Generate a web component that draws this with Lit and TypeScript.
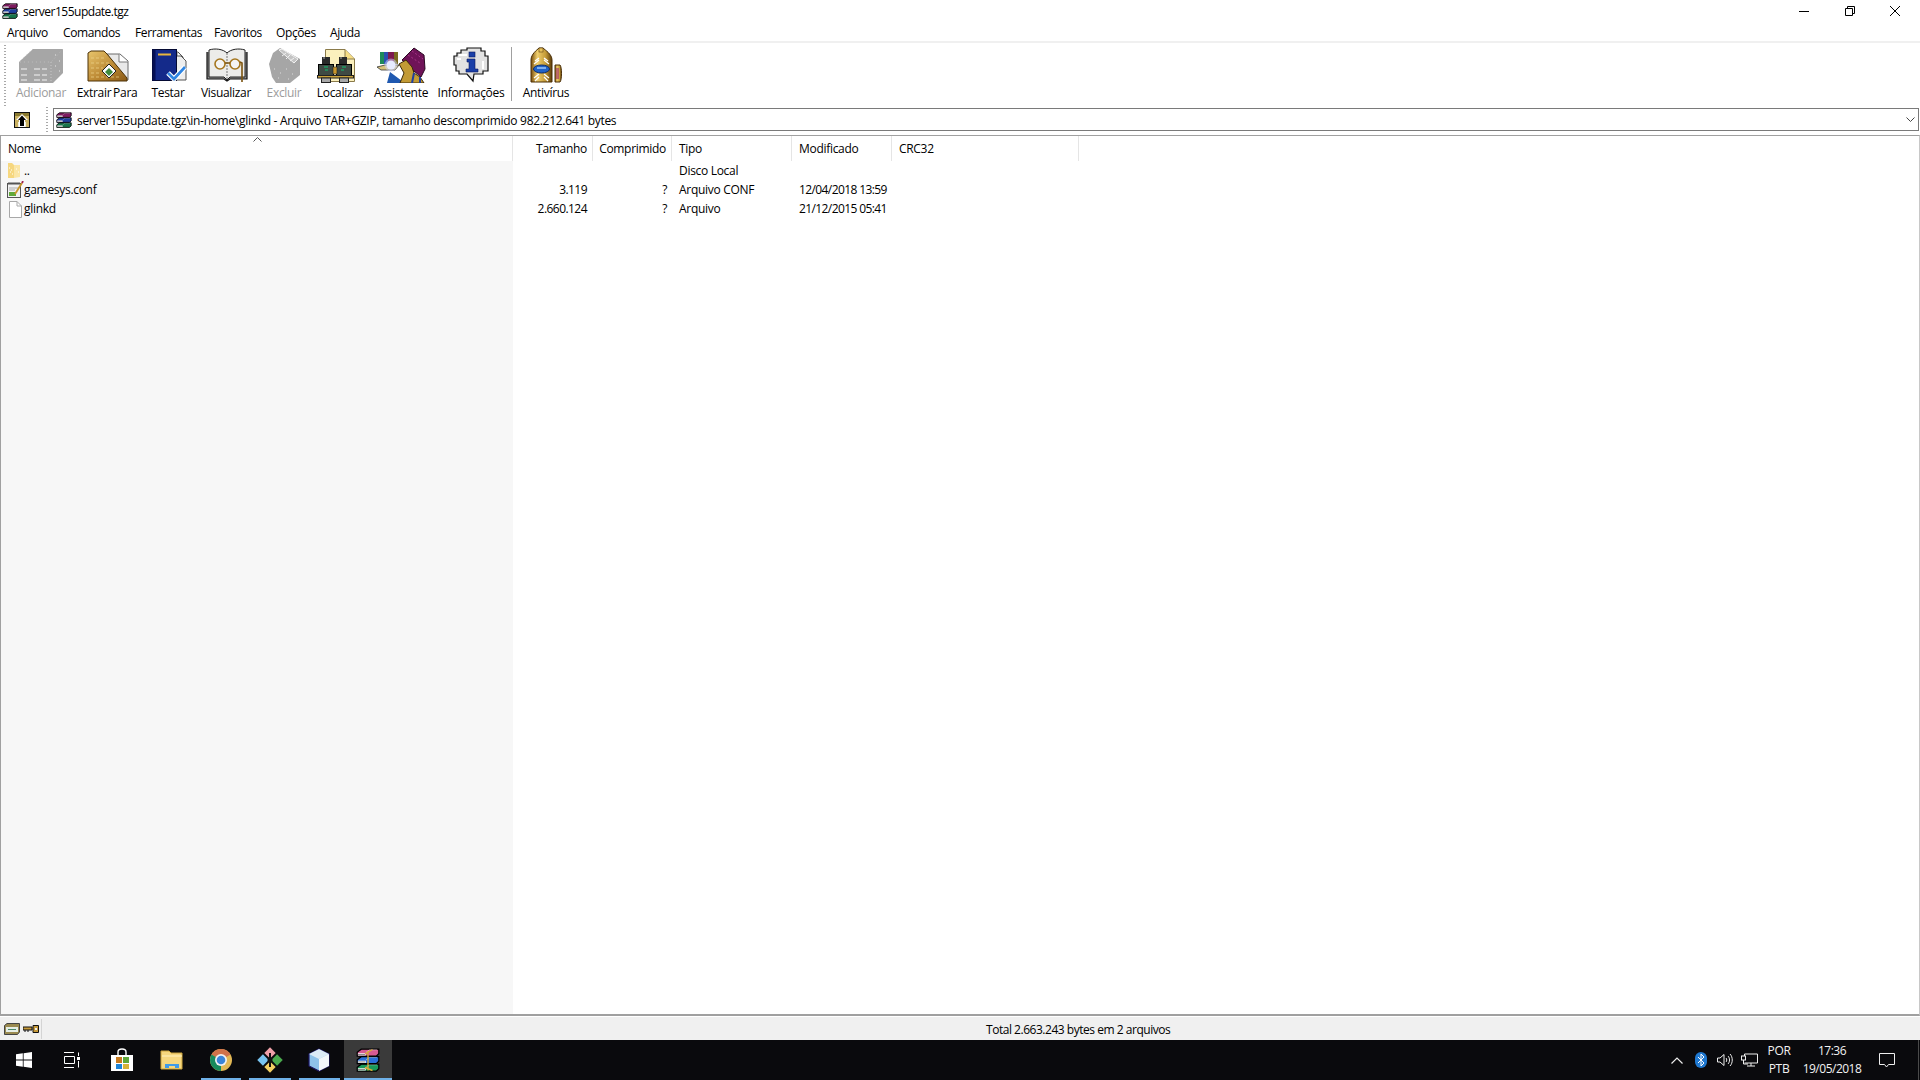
import { LitElement, html, css, svg } from "lit";
import { customElement } from "lit/decorators.js";

const book = (y: number, c: string) => svg`
  <path d="M.8 ${y + 2}L3.500 ${y}H15.200V${y + 3}L13.500 ${y + 4.600}H.8Z" fill="${c}" stroke="#000" stroke-width=".8"/>
  <path d="M1.300 ${y + 2.700}H6.500V${y + 4.200}H1.300Z" fill="#fff"/>
  <path d="M1.300 ${y + 3.500}H6" stroke="#333" stroke-width=".4"/>
  <path d="M6.500 ${y + 2.300}L9 ${y + .4}H14" stroke="#fff" stroke-opacity=".45" stroke-width=".6" fill="none"/>`;

const rar = (s: number, a = "#7d1a5f", b = "#1f3f9e", c = "#16754a", strap = false) => html`<svg width=${s} height=${s} viewBox="0 0 16 16" class="ico">
  ${book(10.800, c)}${book(5.800, b)}${book(.8, a)}
  ${strap ? svg`<path d="M8 2V15M11 1L6 4M6 13L11 15" stroke="#d8a93a" stroke-width=".9" fill="none"/>` : ""}
</svg>`;

const ICONS: Record<string, unknown> = {
  add: html`<svg width="48" height="36" viewBox="0 0 48 36" class="ico">
    <path d="M2 15L16 2H46V26L36 36H2Z" fill="#a6a6a6"/>
    <path d="M16 2L2 15H34L46 2" fill="none" stroke="#bdbdbd" stroke-dasharray="1 3"/>
    <path d="M34 15V36" stroke="#c8c8c8" stroke-dasharray="1 2"/>
    <path d="M4 22H12M17 22H30M4 28H12M17 28H30M4 33H12M17 33H30" stroke="#f4f4f4" stroke-width="1" stroke-dasharray="6 2"/>
    <path d="M38 8h1M42 14h1M38 19h1M42 24h1" stroke="#e8e8e8"/>
  </svg>`,
  extract: html`<svg width="48" height="36" viewBox="0 0 48 36" class="ico">
    <defs><linearGradient id="g1" x1="0" y1="0" x2="1" y2="1"><stop offset="0" stop-color="#e9c56c"/><stop offset=".6" stop-color="#b88430"/><stop offset="1" stop-color="#8a5a16"/></linearGradient></defs>
    <path d="M24 7H37L45 14V33H42Z" fill="#e9e9e9" stroke="#6a6a6a"/>
    <path d="M36 7V15H45" fill="#fff" stroke="#7a7a7a"/>
    <path d="M5 6L8 4H21L24 7L44 31V34H5Z" fill="url(#g1)" stroke="#4c3208"/>
    <path d="M8 11H22M8 16H26M8 21H20M8 26H17M8 30H38" stroke="#f0d68d" stroke-dasharray="3 2" opacity=".7"/>
    <path d="M26 17L33 24L26 31L19 24Z" fill="#fff" stroke="#222"/>
    <path d="M26 21L30 25L26 29L22 25Z" fill="#3f8a3f"/>
  </svg>`,
  test: html`<svg width="48" height="36" viewBox="0 0 48 36" class="ico">
    <path d="M26 5H34L39 10V32H26Z" fill="#d9d9d9" stroke="#555"/>
    <path d="M33 5V11H39" fill="#fff" stroke="#666"/>
    <path d="M30 9H37L42 14V33H30Z" fill="#eee" stroke="#555"/>
    <rect x="8.500" y="2.500" width="24" height="31" fill="#142a8a" stroke="#050a33"/>
    <rect x="8.500" y="2.500" width="3" height="31" fill="#050f55"/>
    <path d="M14 7.500H27" stroke="#e8b63e" stroke-width="2"/>
    <path d="M24 26L30 32L41 20" fill="none" stroke="#fff" stroke-width="5"/>
    <path d="M24 26L30 32L41 20" fill="none" stroke="#2f86e4" stroke-width="2.600"/>
  </svg>`,
  view: html`<svg width="48" height="36" viewBox="0 0 48 36" class="ico">
    <path d="M5 5V32H22L25 34L28 32H45V5" fill="#8c8c8c" stroke="#111" stroke-width="1.200"/>
    <path d="M7 3C13 1 21 2 25 6C29 2 37 1 43 3V30H28L25 33L22 30H7Z" fill="#ececea" stroke="#222"/>
    <path d="M25 6V33" stroke="#777" stroke-dasharray="2 1"/>
    <circle cx="18" cy="17" r="5" fill="#f4f4f4" stroke="#a5761e" stroke-width="1.600"/>
    <circle cx="33" cy="17" r="5" fill="#f4f4f4" stroke="#a5761e" stroke-width="1.600"/>
    <path d="M23 16H28M38 15L40 16L40 35" fill="none" stroke="#7c5410" stroke-width="1.600"/>
  </svg>`,
  del: html`<svg width="48" height="36" viewBox="0 0 48 36" class="ico">
    <path d="M9 17L13 6L20 1L40 12V28L30 36H16L12 30Z" fill="#a6a6a6"/>
    <path d="M19 3L22 2L38 12L34 16ZM26 6L22 9M30 8L26 12M34 11L30 14" fill="#c4c4c4" stroke="#f2f2f2"/>
    <path d="M14 22h1M20 26h1M26 22h1M32 27h1M18 31h1M28 32h1" stroke="#dcdcdc"/>
  </svg>`,
  find: html`<svg width="48" height="36" viewBox="0 0 48 36" class="ico">
    <path d="M9.500 2.500H29L38.500 12V34.500H9.500Z" fill="#fbf0bd" stroke="#8a7a4a"/>
    <path d="M29 2.500V12H38.500" fill="#f6dd85" stroke="#8a7a4a"/>
    <path d="M6 10H14V17H6ZM23 10H31V17H23Z" fill="#2a2a2a"/>
    <path d="M7 11H9M24 11H26" stroke="#aaa"/>
    <rect x="2.500" y="17.500" width="15" height="11" fill="#3f4a44" stroke="#000"/>
    <rect x="20.500" y="17.500" width="15" height="11" fill="#3f4a44" stroke="#000"/>
    <path d="M8 20h4M9 23h3M26 20h4M25 23h3" stroke="#1f9a62" stroke-width="1.500"/>
    <rect x="17" y="20" width="4" height="7" fill="#c9962a" stroke="#222" stroke-width=".6"/>
    <rect x="1.500" y="28.500" width="36" height="2.500" fill="#c9a23c" stroke="#222"/>
    <rect x="5.500" y="31" width="9" height="4.500" fill="#a8a8a8" stroke="#222"/>
    <rect x="23.500" y="31" width="9" height="4.500" fill="#a8a8a8" stroke="#222"/>
  </svg>`,
  wizard: html`<svg width="50" height="36" viewBox="0 0 50 36" class="ico">
    <rect x="4" y="5" width="4" height="12" fill="#1f8a5a"/><rect x="8" y="5" width="4" height="12" fill="#2b4fb0"/>
    <rect x="12" y="5" width="6" height="12" fill="#7d1a4f"/><rect x="18" y="5" width="4" height="12" fill="#7a6a1f"/>
    <path d="M1 20L9 18H23L19 23H5Z" fill="#d7c27a" stroke="#333" stroke-width=".8"/>
    <circle cx="15" cy="18" r="4.500" fill="#fff"/><circle cx="15" cy="18" r="6.500" fill="#cfd8ff" opacity=".5"/>
    <path d="M14 25L26 34V36H11Z" fill="#1f58b0"/>
    <path d="M26 13L33 6L38 1L48 8L49 22L45 30L38 24Z" fill="#6f1358" stroke="#2b0822"/>
    <path d="M32 8L44 16M36 4L47 12" stroke="#a63388" stroke-dasharray="2 2"/>
    <path d="M23 17L30 13L36 20L38 26L44 30L48 36H24L28 26Z" fill="#c29a35" stroke="#3c2a08"/>
    <path d="M38 26L36 36M44 30L44 36" stroke="#1f3f9e" stroke-width="2"/>
  </svg>`,
  info: html`<svg width="36" height="36" viewBox="0 0 36 36" class="ico">
    <path d="M8 3H14V1H28V4H32V9H35V24H30V27H21L20 34L14 27H6V24H3V18H1V9H4V6H8Z" fill="#e2e2e2" stroke="#111" stroke-width="1.200"/>
    <path d="M6 8H14M4 12H8M30 14V22" stroke="#fff" stroke-width="2"/>
    <rect x="16" y="5" width="6" height="5" fill="#1a3fa8" stroke="#0a1a60" stroke-width=".6"/>
    <path d="M14 12H22V22H25V25H13V22H16V15H14Z" fill="#1a3fa8" stroke="#0a1a60" stroke-width=".6"/>
  </svg>`,
  av: html`<svg width="36" height="36" viewBox="0 0 36 36" class="ico">
    <defs><linearGradient id="g2" x1="0" x2="1"><stop offset="0" stop-color="#7a4e0c"/><stop offset=".3" stop-color="#f0cf6e"/><stop offset=".7" stop-color="#c49a36"/><stop offset="1" stop-color="#5a3a0a"/></linearGradient></defs>
    <path d="M3 35V13C3 7 9 3 11 1H15C17 3 24 7 24 13V35Z" fill="url(#g2)" stroke="#4a2e06"/>
    <rect x="11" y="1" width="4" height="4" fill="#e8c25a" stroke="#4a2e06" stroke-width=".5"/>
    <path d="M6 17L11 13M21 17L16 13M7 14L11 11M20 14L16 11M6 31L11 27M21 31L16 27M7 34L11 30M20 34L16 30" stroke="#fff" stroke-width="1.200"/>
    <ellipse cx="13.500" cy="22" rx="8" ry="4" fill="#1f62c8" stroke="#0d2a66"/>
    <path d="M9 21H18" stroke="#a8d0ff" stroke-width="1.400"/>
    <path d="M27 18H32C34 20 34 33 32 35H27Z" fill="url(#g2)" stroke="#4a2e06"/>
    <path d="M29.500 21V32" stroke="#a3306e" stroke-width="3" opacity=".6"/>
  </svg>`,
};

const TOOLS = [
  { id: "add", t: "Adicionar", w: 62, off: true },
  { id: "extract", t: "Extrair Para", w: 70 },
  { id: "test", t: "Testar", w: 52 },
  { id: "view", t: "Visualizar", w: 64 },
  { id: "del", t: "Excluir", w: 52, off: true },
  { id: "find", t: "Localizar", w: 60 },
  { id: "wizard", t: "Assistente", w: 62 },
  { id: "info", t: "Informações", w: 78 },
];

const MENU = [["Arquivo", 56], ["Comandos", 72], ["Ferramentas", 79], ["Favoritos", 62], ["Opções", 54], ["Ajuda", 50]] as const;

const folderIco = html`<svg width="16" height="17" viewBox="0 0 16 17" class="ico"><path d="M0 1H4L6 3V16H0Z" fill="#f6d77f"/><path d="M6 3H12V15L6 16Z" fill="#fbe6a6"/><path d="M1 6h1M3 8h1M2 10h1M4 12h1M8 7h1M10 10h1" stroke="#fff"/></svg>`;
const confIco = html`<svg width="18" height="18" viewBox="0 0 18 18" class="ico"><rect x=".5" y="2.500" width="13" height="14" fill="#f2f2f2" stroke="#555"/><path d="M2 1V4M4 1V4M6 1V4M8 1V4M10 1V4M12 1V4" stroke="#555"/><path d="M2 7H12M2 9H8" stroke="#aaa"/><rect x="2" y="11" width="7" height="4" fill="#5fa83a"/><path d="M8 13L15 2" stroke="#c9962a" stroke-width="1.800"/><path d="M15 2L16 0" stroke="#a01f4f" stroke-width="1.800"/></svg>`;
const fileIco = html`<svg width="16" height="18" viewBox="0 0 16 18" class="ico"><path d="M1.500 1.500H9L13.500 6V17.500H1.500Z" fill="#fff" stroke="#a8a8a8"/><path d="M9 1.500V6H13.500" fill="none" stroke="#a8a8a8"/></svg>`;

const ROWS = [
  { ico: folderIco, n: "..", s: "", c: "", t: "Disco Local", m: "" },
  { ico: confIco, n: "gamesys.conf", s: "3.119", c: "?", t: "Arquivo CONF", m: "12/04/2018 13:59" },
  { ico: fileIco, n: "glinkd", s: "2.660.124", c: "?", t: "Arquivo", m: "21/12/2015 05:41" },
];

const TASK = [
  { w: 48, ico: html`<svg width="16" height="16" viewBox="0 0 16 16" class="ico"><path d="M0 2.300L6.800 1.300V7.600H0ZM7.600 1.200L16 0V7.600H7.600ZM0 8.400H6.800V14.700L0 13.700ZM7.600 8.400H16V16L7.600 14.800Z" fill="#fff"/></svg>` },
  { w: 48, ico: html`<svg width="18" height="16" viewBox="0 0 18 16" class="ico" fill="none" stroke="#fff"><path d="M1 .5H11M1.500 4.500H11.500V11.500H1.500ZM1 15.500H11M15.500 .5V4M15.500 9V15.500"/><rect x="14" y="5" width="3" height="3" fill="#fff" stroke="none"/></svg>` },
  { w: 51, ico: html`<svg width="24" height="24" viewBox="0 0 24 24" class="ico"><path d="M8 7V4C8 0 16 0 16 4V7" fill="none" stroke="#fff" stroke-width="1.400"/><path d="M1 7H23V23H1Z" fill="#fff"/><rect x="6" y="9" width="6" height="6" fill="#c87a1e"/><rect x="13" y="9" width="6" height="6" fill="#5fa83a"/><rect x="6" y="16" width="6" height="5" fill="#1e84d8"/><rect x="13" y="16" width="6" height="5" fill="#d8b23a"/></svg>` },
  { w: 50, ico: html`<svg width="24" height="20" viewBox="0 0 24 20" class="ico"><path d="M1 1H9L11 3H22V19H1Z" fill="#f6d77f" stroke="#c9a23c"/><path d="M2 6H22" stroke="#fff2c2"/><path d="M5 14H19V18H15V16H9V18H5Z" fill="#3f9be8"/></svg>` },
  { w: 48, ico: html`<svg width="24" height="24" viewBox="0 0 24 24" class="ico"><circle cx="12" cy="12" r="11" fill="#e2b855"/><path d="M12 12L2.500 6.500A11 11 0 0 1 21.500 6.500Z" fill="#d0724a"/><path d="M12 12L2.500 6.500A11 11 0 0 0 12 23Z" fill="#178a5c"/><circle cx="12" cy="12" r="6" fill="#f1f1f1"/><circle cx="12" cy="12" r="4.300" fill="#3a84d8"/></svg>`, on: 1 },
  { w: 50, ico: html`<svg width="26" height="26" viewBox="0 0 26 26" class="ico"><g transform="rotate(45 13 13)"><rect x="4" y="4" width="8" height="8" fill="#efa0a8"/><rect x="14" y="4" width="8" height="8" fill="#4aaa4e"/><rect x="4" y="14" width="8" height="8" fill="#78c4f0"/><rect x="14" y="14" width="8" height="8" fill="#f2cf62"/></g><path d="M13 6V20" stroke="#111" stroke-width="2"/><circle cx="13" cy="13" r="2.500" fill="#111"/></svg>`, on: 1 },
  { w: 49, ico: html`<svg width="26" height="24" viewBox="0 0 26 24" class="ico"><path d="M12 1L22 6V18L12 23L2 18V6Z" fill="#8fc2ea" stroke="#1c1560" stroke-width="1.200"/><path d="M12 1L22 6L12 11L2 6Z" fill="#dbeaf6"/><path d="M12 11L22 6V18L12 23Z" fill="#f2f6fa"/></svg>`, on: 1 },
  { w: 48, ico: rar(24, "#d85a92", "#2a6fd8", "#1a9a5a", true), on: 1, act: 1 },
];

@customElement("app-root")
export class AppRoot extends LitElement {
  static styles = css`
    :host { display: flex; flex-direction: column; width: 1920px; height: 1080px; overflow: hidden; background: #fff; color: #000;
      font: 12px/16px "Open Sans", "Noto Sans", sans-serif; letter-spacing: -.3px; }
    .ico { display: block; flex: none; }
    .top { height: 41px; flex: none; }
    .title { height: 22px; display: flex; align-items: center; padding-left: 2px; }
    .tname { margin: 2px 0 0 5px; letter-spacing: -.5px; }
    .ctrls { margin-left: auto; display: flex; padding-right: 2px; height: 20px; }
    .ctrl { width: 45.5px; display: flex; align-items: center; justify-content: center; }
    .menu { display: flex; height: 19px; box-sizing: border-box; padding: 3px 0 0 7px; letter-spacing: -.38px; }
    .strip { height: 2px; flex: none; background: #f0f0f0; }
    .tools { height: 64px; flex: none; display: flex; position: relative; padding-left: 10px; }
    .grip { width: 2px; background: repeating-linear-gradient(180deg, #a9a9a9 0 1px, transparent 1px 3px); flex: none; }
    .tgrip { position: absolute; left: 4px; top: 2px; bottom: 0; }
    .tool { display: flex; flex-direction: column; align-items: center; flex: none; padding-top: 4px; }
    .tool .ic { height: 36px; display: flex; align-items: center; }
    .tool .lb { margin-top: 2px; white-space: nowrap; word-spacing: -1px; }
    .off .lb { color: #9c9c9c; }
    .vsep { width: 1px; height: 54px; margin: 4px 1px 0 1px; background: #a0a0a0; flex: none; }
    .addr { height: 25px; flex: none; display: flex; align-items: center; padding-left: 14px; }
    .up { margin-right: 16px; }
    .agrip { height: 25px; margin-right: 5px; }
    .abox { flex: 1; height: 23px; box-sizing: border-box; border: 1px solid #7a7a7a; display: flex; align-items: center; padding-left: 2px; margin-right: 1px; }
    .apath { margin: 2px 0 0 5px; }
    .chev { margin-left: auto; margin-right: 3px; }
    .list { flex: 1; margin-top: 3px; border: 1px solid #a0a0a0; border-bottom-width: 2px; border-right-color: #c8c8c8; display: flex; flex-direction: column; min-height: 0; }
    .grid { display: grid; grid-template-columns: 512px 80px 79px 120px 100px 187px; }
    .hdr { height: 25px; flex: none; }
    .hc { border-right: 1px solid #e5e5e5; display: flex; align-items: center; padding-left: 7px; position: relative; box-sizing: border-box; }
    .nm { padding-left: 7px; }
    .r { justify-content: flex-end; padding: 0 5px 0 0; }
    .caret { position: absolute; left: 252px; top: 1px; }
    .body { flex: 1; background: linear-gradient(90deg, #f7f7f7 512px, #fff 512px); }
    .row { height: 19px; }
    .row > div { display: flex; align-items: center; padding-left: 7px; white-space: nowrap; }
    .row > .r { padding: 0 5px 0 0; letter-spacing: -.55px; }
    .row > .sz { padding-right: 6px; }
    .row > .date { letter-spacing: -.6px; }
    .row > .name { padding-left: 6px; }
    .nic { width: 17px; display: flex; justify-content: center; }
    .status { height: 23px; flex: none; background: #f0f0f0; display: flex; align-items: center; padding-left: 4px; margin-top: 1px;
      background-image: radial-gradient(#e2e2e2 .6px, transparent .7px); background-size: 8px 8px; }
    .ssep { width: 1px; height: 20px; background: #d4d4d4; margin-left: 2px; }
    .stext { margin: 2px 0 0 944px; white-space: nowrap; letter-spacing: -.47px; }
    .task { height: 40px; flex: none; background: #0a0a0d; display: flex; color: #f2f2f2; }
    .tb { height: 40px; display: flex; align-items: center; justify-content: center; position: relative; flex: none; box-sizing: border-box; }
    .tb.on::after { content: ""; position: absolute; left: 4px; right: 4px; bottom: 0; height: 2px; background: #6fb1e8; }
    .tb.act { background: #3a3a3a; background-image: radial-gradient(#4a4a4a .6px, transparent .7px); background-size: 4px 4px; }
    .tb.act::after { left: 0; right: 0; }
    .tray { margin-left: auto; display: flex; align-items: center; height: 40px; }
    .ti { height: 40px; flex: none; display: flex; flex-direction: column; align-items: center; justify-content: center; line-height: 18px; }
    .clock { letter-spacing: -.5px; }
    .end { border-right: 1px solid #4a4a4a; box-sizing: border-box; margin-right: 1px; }
  `;

  render() {
    return html`
      <div class="top">
        <div class="title">
          ${rar(16)}
          <span class="tname">server155update.tgz</span>
          <div class="ctrls">
            <div class="ctrl"><svg width="10" height="10" viewBox="0 0 10 10" class="ico"><path d="M0 5.500H10" stroke="#000"/></svg></div>
            <div class="ctrl"><svg width="10" height="10" viewBox="0 0 10 10" class="ico" fill="none" stroke="#000"><path d="M.5 2.500H7.500V9.500H.5ZM2.500 2.500V.5H9.500V7.500H7.500"/></svg></div>
            <div class="ctrl"><svg width="10" height="10" viewBox="0 0 10 10" class="ico"><path d="M0 0L10 10M10 0L0 10" stroke="#000"/></svg></div>
          </div>
        </div>
        <div class="menu">${MENU.map(([t, w]) => html`<span style="width:${w}px">${t}</span>`)}</div>
      </div>
      <div class="strip"></div>
      <div class="tools">
        <div class="grip tgrip"></div>
        ${TOOLS.map((x) => html`<div class="tool ${x.off ? "off" : ""}" style="width:${x.w}px"><div class="ic">${ICONS[x.id]}</div><div class="lb">${x.t}</div></div>`)}
        <div class="vsep"></div>
        <div class="tool" style="width:66px"><div class="ic">${ICONS.av}</div><div class="lb">Antivírus</div></div>
      </div>
      <div class="addr">
        <svg class="ico up" width="16" height="16" viewBox="0 0 16 16"><rect width="16" height="16" fill="#111"/><rect x="1" y="1" width="14" height="14" fill="#c9b060"/><path d="M1 1H15V4H1Z" fill="#8a7a30"/><rect x="4" y="10" width="8" height="5" fill="#f2efd8"/><path d="M8 2L14 8H11V15H5V8H2Z" fill="#fff"/><path d="M8 3.500L12 8H10V14H6V8H4Z" fill="#000"/></svg>
        <div class="grip agrip"></div>
        <div class="abox">
          ${rar(16)}
          <span class="apath">server155update.tgz\\in-home\\glinkd - Arquivo TAR+GZIP, tamanho descomprimido 982.212.641 bytes</span>
          <svg class="ico chev" width="9" height="5" viewBox="0 0 9 5"><path d="M.5 .5L4.500 4.500L8.500 .5" fill="none" stroke="#444"/></svg>
        </div>
      </div>
      <div class="list">
        <div class="grid hdr">
          <div class="hc nm">Nome<svg class="caret" width="9" height="5" viewBox="0 0 9 5"><path d="M.5 4.500L4.500 .5L8.500 4.500" fill="none" stroke="#555"/></svg></div>
          <div class="hc r">Tamanho</div>
          <div class="hc r">Comprimido</div>
          <div class="hc">Tipo</div>
          <div class="hc">Modificado</div>
          <div class="hc">CRC32</div>
        </div>
        <div class="body">
          ${ROWS.map((r) => html`<div class="grid row">
            <div class="name"><span class="nic">${r.ico}</span>${r.n}</div>
            <div class="r sz">${r.s}</div>
            <div class="r">${r.c}</div>
            <div>${r.t}</div>
            <div class="date">${r.m}</div>
            <div></div>
          </div>`)}
        </div>
      </div>
      <div class="status">
        <svg class="ico" width="16" height="12" viewBox="0 0 16 12"><path d="M.5 2.500L3 .5H15.500V9L13.500 11.500H.5Z" fill="#9a8a50" stroke="#444"/><rect x="2" y="4" width="12" height="5" fill="#e6eee6"/><path d="M4 6.500H12" stroke="#4a8a6a"/></svg>
        <svg class="ico" style="margin-left:3px" width="16" height="8" viewBox="0 0 16 8"><path d="M0 2H9V5H0ZM10 .5H15.500V7.500H10Z" fill="#c69a3a" stroke="#111"/><rect x="12" y="3" width="2" height="2" fill="#f0f0f0"/><path d="M2 5V7M5 5V7" stroke="#111"/></svg>
        <div class="ssep"></div>
        <div class="stext">Total 2.663.243 bytes em 2 arquivos</div>
      </div>
      <div class="task">
        ${TASK.map((t) => html`<div class="tb ${t.on ? "on" : ""} ${t.act ? "act" : ""}" style="width:${t.w}px">${t.ico}</div>`)}
        <div class="tray">
          <div class="ti" style="width:24px"><svg class="ico" width="12" height="7" viewBox="0 0 12 7"><path d="M.5 6.500L6 1L11.500 6.500" fill="none" stroke="#eee" stroke-width="1.200"/></svg></div>
          <div class="ti" style="width:24px"><svg class="ico" width="12" height="16" viewBox="0 0 12 16"><rect width="12" height="16" rx="6" fill="#1f78d0"/><path d="M3 5L9 11L6 14V2L9 5L3 11" fill="none" stroke="#fff"/></svg></div>
          <div class="ti" style="width:23px"><svg class="ico" width="16" height="14" viewBox="0 0 16 14" fill="none" stroke="#eee"><path d="M.5 5H3L7 1.500V12.500L3 9H.5ZM9 5C10 6 10 8 9 9M11 3C13 5 13 9 11 11M13 1C16 4 16 10 13 13"/></svg></div>
          <div class="ti" style="width:26px"><svg class="ico" width="17" height="14" viewBox="0 0 17 14" fill="none" stroke="#eee"><path d="M3.500 3V1H16.500V10H3.500M6 13H14M10 10V13"/><rect x=".5" y="3" width="4" height="4" fill="#0a0a0d"/><path d="M2.500 7V11H7"/></svg></div>
          <div class="ti" style="width:34px"><span>POR</span><span>PTB</span></div>
          <div class="ti clock" style="width:72px"><span>17:36</span><span>19/05/2018</span></div>
          <div class="ti" style="width:38px"><svg class="ico" width="16" height="15" viewBox="0 0 16 15" fill="none" stroke="#eee"><path d="M.5 .5H15.500V11.500H9.500L7.500 14L5.500 11.500H.5Z"/></svg></div>
          <div class="ti end" style="width:13px"></div>
        </div>
      </div>
    `;
  }
}
